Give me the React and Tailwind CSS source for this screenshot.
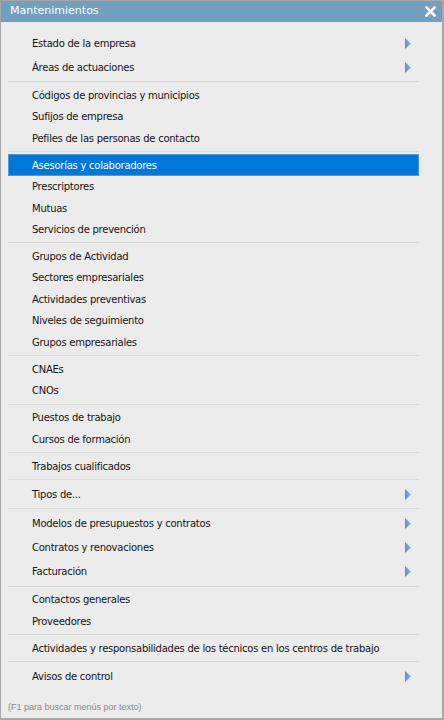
import React from "react";

// menu groups, each group separated by a thin line
const groups = [
  [
    { label: "Estado de la empresa", sub: true },
    { label: "Áreas de actuaciones", sub: true },
  ],
  [
    { label: "Códigos de provincias y municipios" },
    { label: "Sufijos de empresa" },
    { label: "Pefiles de las personas de contacto" },
  ],
  [
    { label: "Asesorías y colaboradores", selected: true },
    { label: "Prescriptores" },
    { label: "Mutuas" },
    { label: "Servicios de prevención" },
  ],
  [
    { label: "Grupos de Actividad" },
    { label: "Sectores empresariales" },
    { label: "Actividades preventivas" },
    { label: "Niveles de seguimiento" },
    { label: "Grupos empresariales" },
  ],
  [{ label: "CNAEs" }, { label: "CNOs" }],
  [{ label: "Puestos de trabajo" }, { label: "Cursos de formación" }],
  [{ label: "Trabajos cualificados" }],
  [{ label: "Tipos de...", sub: true }],
  [
    { label: "Modelos de presupuestos y contratos", sub: true },
    { label: "Contratos y renovaciones", sub: true },
    { label: "Facturación", sub: true },
  ],
  [{ label: "Contactos generales" }, { label: "Proveedores" }],
  [{ label: "Actividades y responsabilidades de los técnicos en los centros de trabajo" }],
  [{ label: "Avisos de control", sub: true }],
];

function Arrow() {
  return (
    <svg width="6" height="11" viewBox="0 0 6 11" className="shrink-0">
      <defs>
        <linearGradient id="arr" x1="0" y1="0" x2="1" y2="0">
          <stop offset="0" stopColor="#5b84e6" />
          <stop offset="1" stopColor="#9ab2ee" />
        </linearGradient>
      </defs>
      <polygon points="0,0 6,5.5 0,11" fill="url(#arr)" />
    </svg>
  );
}

function MenuItem({ item }) {
  if (item.selected) {
    return (
      <div className="flex items-center h-[21.5px] pl-6 pr-2 bg-[#0078d7] border border-[#4a9be0] text-white">
        <span className="flex-1 -ml-px">{item.label}</span>
      </div>
    );
  }
  return (
    <div className={`flex items-center pl-6 pr-2 text-[#141414] ${item.sub ? "h-[24px]" : "h-[21.5px]"}`}>
      <span className="flex-1">{item.label}</span>
      {item.sub && <Arrow />}
    </div>
  );
}

export default function App() {
  return (
    <div className="w-[444px] h-[720px] bg-white">
      <div className="w-full h-full flex flex-col bg-[#ebebeb] border border-[#a8a8a8] border-r-2 border-b-2 font-['DejaVu_Sans',sans-serif] text-[10px] tracking-[-0.25px]">
        <div className="h-[21px] shrink-0 bg-[#709fc0] flex items-center justify-between pl-[9px] pr-[6px] text-white text-[11px] tracking-normal">
          <span>Mantenimientos</span>
          <svg width="11" height="11" viewBox="0 0 11 11">
            <path d="M1.5 1.5 L9.5 9.5 M9.5 1.5 L1.5 9.5" stroke="white" strokeWidth="2.6" strokeLinecap="square" />
          </svg>
        </div>
        <div className="flex-1 flex flex-col pt-[9px] pl-[7px] w-[418px]">
          {groups.map((group, gi) => (
            <div key={gi}>
              {gi > 0 && (
                <div className="py-[2.2px]">
                  <div className="h-px bg-[#d9d9d9]" />
                </div>
              )}
              {group.map((item, ii) => (
                <MenuItem key={ii} item={item} />
              ))}
            </div>
          ))}
        </div>
        <div className="shrink-0 pl-[7px] pb-[4px] text-[#8a8a8a] text-[9px] font-['Liberation_Sans',sans-serif] tracking-normal">
          (F1 para buscar menús por texto)
        </div>
      </div>
    </div>
  );
}
